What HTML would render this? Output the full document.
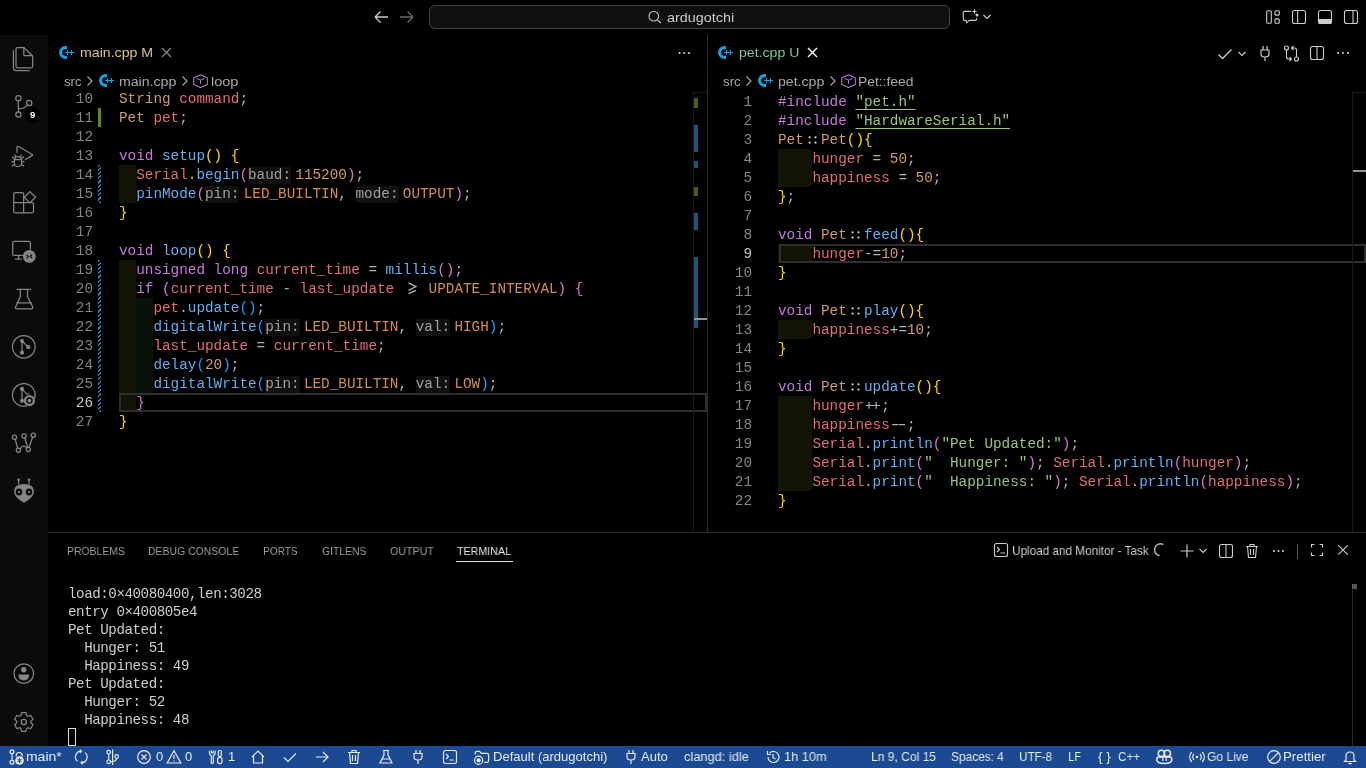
<!DOCTYPE html>
<html><head><meta charset="utf-8"><style>
*{margin:0;padding:0;box-sizing:border-box}
html,body{width:1366px;height:768px;overflow:hidden;background:#000;font-family:"Liberation Sans",sans-serif;color:#ccc}
.abs{position:absolute}
#act{position:absolute;left:0;top:35px;width:48px;height:711px;background:#0b0b0b}
#status{position:absolute;left:0;top:746px;width:1366px;height:22px;background:#1b4a92;color:#e8e8e8;font-size:13px}
.st{position:absolute;top:0;height:22px;line-height:22px;white-space:nowrap}
.ln{will-change:transform;position:absolute;width:40px;text-align:right;font-family:"Liberation Mono",monospace;font-size:14.33px;line-height:19px;height:19px;color:#858585}
.cl{will-change:transform;position:absolute;font-family:"Liberation Mono",monospace;font-size:14.33px;line-height:19px;height:19px;white-space:pre;color:#abb2bf}
.kw{color:#c678dd}.fn{color:#61afef}.va{color:#e06c75}.ty{color:#d19a66}.nu{color:#d19a66}.ma{color:#d58d45}
.op{color:#abb2bf}.pu{color:#abb2bf}.b1{color:#ffd700}.b2{color:#da70d6}.b3{color:#179fff}
.str{color:#98c379}.stu{color:#98c379;text-decoration:underline;text-underline-offset:3px}
.sg{color:#98c379}
.lig2{display:inline-block;width:17.2px;text-align:center}
.hint{display:inline-block;margin-right:4.3px;background:#101010;color:#a0a0a0;text-align:center;height:17px;line-height:17px;vertical-align:top;margin-top:1px}
.tabt{position:absolute;font-size:13px;white-space:nowrap}
.bc{position:absolute;font-size:13px;color:#a9a9a9;white-space:nowrap}
.ptab{position:absolute;top:541px;font-size:11px;color:#9d9d9d;white-space:nowrap;height:18px;line-height:18px}
.term{will-change:transform;position:absolute;left:68px;font-family:"Liberation Mono",monospace;font-size:14.2px;letter-spacing:-0.45px;line-height:18px;color:#cccccc;white-space:pre}
svg{position:absolute;overflow:visible}
.tx{will-change:transform;position:absolute;white-space:nowrap;line-height:20px;height:20px}
.lg{position:relative;display:inline-block;width:17.2px;height:19px;vertical-align:top}

</style></head><body>
<!-- title bar -->
<svg style="left:372px;top:9px" width="18" height="16" viewBox="0 0 18 16"><path d="M3 8H16M3 8L8.5 2.5M3 8L8.5 13.5" stroke="#cccccc" stroke-width="1.3" fill="none"/></svg>
<svg style="left:398px;top:9px" width="18" height="16" viewBox="0 0 18 16"><path d="M2 8H15M15 8L9.5 2.5M15 8L9.5 13.5" stroke="#6a6a6a" stroke-width="1.3" fill="none"/></svg>
<div class="abs" style="left:429px;top:5px;width:521px;height:24px;border:1px solid #444444;border-radius:6px;background:#0f0f0f"></div>
<svg style="left:640px;top:0" width="30" height="35" viewBox="640 0 30 35"><circle cx="653.8" cy="16.2" r="4.8" stroke="#cccccc" stroke-width="1.05" fill="none"/><path d="M657.3 19.7L660.8 23" stroke="#cccccc" stroke-width="1.1"/></svg>
<svg style="left:950px;top:0" width="40" height="35" viewBox="950 0 40 35"><path d="M970.9 11.4H964.5Q963.3 11.4 963.3 12.6V19.2Q963.3 20.4 964.5 20.4H966L966.8 22.8L969.3 20.4H975.4Q976.6 20.4 976.6 19.2V18" stroke="#cccccc" stroke-width="1.1" fill="none"/><path d="M974.4 8.3L975.1 10.7L977.5 11.4L975.1 12.1L974.4 14.5L973.7 12.1L971.3 11.4L973.7 10.7Z" fill="#cccccc"/><circle cx="977" cy="15.1" r="1.5" fill="#cccccc"/></svg>
<svg style="left:982px;top:12px" width="10" height="10" viewBox="0 0 10 10"><path d="M1.5 3L5 6.5L8.5 3" stroke="#cccccc" stroke-width="1.2" fill="none"/></svg>
<svg style="left:1265px;top:9px" width="16" height="16" viewBox="0 0 16 16"><rect x="1.7" y="1.7" width="4.6" height="12.6" rx="1" stroke="#cccccc" stroke-width="1.1" fill="none"/><rect x="9.9" y="1.7" width="4.4" height="4.4" rx="1" stroke="#cccccc" stroke-width="1.1" fill="none"/><rect x="9.9" y="9.9" width="4.4" height="4.4" rx="1" stroke="#cccccc" stroke-width="1.1" fill="none"/></svg>
<svg style="left:1291px;top:9px" width="16" height="16" viewBox="0 0 16 16"><rect x="1.5" y="1.5" width="13" height="13" rx="2" stroke="#cccccc" stroke-width="1.1" fill="none"/><path d="M6.6 1.5V14.5" stroke="#cccccc" stroke-width="1.1"/></svg>
<svg style="left:1317px;top:9px" width="16" height="16" viewBox="0 0 16 16"><rect x="1.5" y="1.5" width="13" height="13" rx="2" stroke="#cccccc" stroke-width="1.1" fill="none"/><rect x="1.5" y="10" width="13" height="4.5" fill="#cccccc"/></svg>
<svg style="left:1343px;top:9px" width="16" height="16" viewBox="0 0 16 16"><rect x="1.5" y="1.5" width="13" height="13" rx="2" stroke="#cccccc" stroke-width="1.1" fill="none"/><path d="M10 1.5V14.5" stroke="#cccccc" stroke-width="1.1"/></svg>

<!-- activity bar -->
<div id="act"></div>
<svg style="left:0;top:0" width="48" height="768" viewBox="0 0 48 768"><path d="M17.5 47.5H23.8L32.7 56.2V66.3Q32.7 67.8 31.2 67.8H17.5Q16 67.8 16 66.3V49Q16 47.5 17.5 47.5Z" stroke="#858585" stroke-width="1.25" fill="none" stroke-linejoin="round" stroke-linecap="round"/><path d="M23.8 47.5V54.7Q23.8 55.6 24.7 55.6H32.5" stroke="#858585" stroke-width="1.25" fill="none" stroke-linejoin="round" stroke-linecap="round"/><path d="M13.4 50.5V67.5Q13.4 70.5 16.4 70.5H29.3" stroke="#858585" stroke-width="1.25" fill="none" stroke-linejoin="round" stroke-linecap="round"/><circle cx="18.4" cy="98.3" r="2.6" stroke="#858585" stroke-width="1.25" fill="none" stroke-linejoin="round" stroke-linecap="round"/><circle cx="29.2" cy="103" r="2.6" stroke="#858585" stroke-width="1.25" fill="none" stroke-linejoin="round" stroke-linecap="round"/><circle cx="18.4" cy="114.5" r="2.6" stroke="#858585" stroke-width="1.25" fill="none" stroke-linejoin="round" stroke-linecap="round"/><path d="M18.4 100.9V111.9M27.5 105Q25 108.5 18.6 108.8" stroke="#858585" stroke-width="1.25" fill="none" stroke-linejoin="round" stroke-linecap="round"/><path d="M17 152.5V147.2Q17 145.8 18.3 146.5L32 154.3Q33 155 32 155.6L25.5 159.5" stroke="#858585" stroke-width="1.25" fill="none" stroke-linejoin="round" stroke-linecap="round"/><path d="M14.3 160.5Q14.3 156.5 18 156.5Q21.7 156.5 21.7 160.5V163Q21.7 166.5 18 166.5Q14.3 166.5 14.3 163Z" stroke="#858585" stroke-width="1.25" fill="none" stroke-linejoin="round" stroke-linecap="round"/><path d="M12.3 157L14.6 158.6M23.7 157L21.4 158.6M12 161.5H14.3M24 161.5H21.7M12.3 166L14.6 164.4M23.7 166L21.4 164.4M15.5 156.8L14.8 155M20.5 156.8L21.2 155M14.5 159.5H21.5" stroke="#858585" stroke-width="1.25" fill="none" stroke-linejoin="round" stroke-linecap="round"/><path d="M23.6 202.6V194.2Q23.6 192.7 22.1 192.7H15.2Q13.7 192.7 13.7 194.2V211.3Q13.7 212.8 15.2 212.8H32Q33.5 212.8 33.5 211.3V204.1Q33.5 202.6 32 202.6H13.7M23.6 202.6V212.8" stroke="#858585" stroke-width="1.25" fill="none" stroke-linejoin="round" stroke-linecap="round"/><path d="M29.9 191.6L35.5 197.3L29.9 202.9L24.3 197.3Z" stroke="#858585" stroke-width="1.25" fill="none" stroke-linejoin="round" stroke-linecap="round"/><path d="M22.5 255.4H14.2Q12.7 255.4 12.7 253.9V242.8Q12.7 241.3 14.2 241.3H28.9Q30.4 241.3 30.4 242.8V249" stroke="#858585" stroke-width="1.25" fill="none" stroke-linejoin="round" stroke-linecap="round"/><path d="M18.5 255.5V259M15.3 259H21.5" stroke="#858585" stroke-width="1.25" fill="none" stroke-linejoin="round" stroke-linecap="round"/><circle cx="29.3" cy="256.4" r="6.4" fill="#858585"/><path d="M26.6 254.8L28.4 256.6L26.6 258.4M32 254.4L30.2 256.2L32 258" stroke="#0b0b0b" stroke-width="1.1" fill="none"/><path d="M17.2 289.3H30.4M20.3 289.3V296.5L15.6 307Q15 308.8 17 308.8H31.3Q33.3 308.8 32.7 307L27.5 296.5V289.3M16.8 302.8H31.5" stroke="#858585" stroke-width="1.25" fill="none" stroke-linejoin="round" stroke-linecap="round"/><circle cx="23.8" cy="346.8" r="11.3" stroke="#858585" stroke-width="1.25" fill="none" stroke-linejoin="round" stroke-linecap="round"/><circle cx="22" cy="341" r="2.1" fill="#858585"/><circle cx="22" cy="352.7" r="2.1" fill="#858585"/><circle cx="28.3" cy="347.2" r="2.1" fill="#858585"/><path d="M22 341V352.7M22 341L28.3 347.2" stroke="#858585" stroke-width="1.25" fill="none" stroke-linejoin="round" stroke-linecap="round"/><path d="M34.7 397.9A11.3 11.3 0 1 0 26.7 405.9" stroke="#858585" stroke-width="1.25" fill="none" stroke-linejoin="round" stroke-linecap="round"/><circle cx="22" cy="388.9" r="2.1" fill="#858585"/><circle cx="22" cy="400.8" r="2.1" fill="#858585"/><path d="M22 388.9V400.8M22 388.9L26.5 393.8H29" stroke="#858585" stroke-width="1.25" fill="none" stroke-linejoin="round" stroke-linecap="round"/><circle cx="29.4" cy="400.6" r="5.6" fill="#858585"/><circle cx="29.4" cy="400.6" r="2.6" stroke="#0b0b0b" stroke-width="1.3" fill="#858585"/><circle cx="14.5" cy="437.3" r="2.1" stroke="#858585" stroke-width="1.25" fill="none" stroke-linejoin="round" stroke-linecap="round"/><circle cx="24" cy="436" r="2.1" stroke="#858585" stroke-width="1.25" fill="none" stroke-linejoin="round" stroke-linecap="round"/><circle cx="33.3" cy="435.2" r="2.1" stroke="#858585" stroke-width="1.25" fill="none" stroke-linejoin="round" stroke-linecap="round"/><circle cx="18.4" cy="450.3" r="2.1" stroke="#858585" stroke-width="1.25" fill="none" stroke-linejoin="round" stroke-linecap="round"/><circle cx="28.3" cy="449.5" r="2.1" stroke="#858585" stroke-width="1.25" fill="none" stroke-linejoin="round" stroke-linecap="round"/><path d="M15.3 439.3L17.6 448.3M20.2 448.8Q23 444 26.6 447.8M24.8 438L27.6 447.5M32.6 437.2L29 447.5" stroke="#858585" stroke-width="1.25" fill="none" stroke-linejoin="round" stroke-linecap="round"/><path d="M24 484Q34 484 34 491.5Q34 497 24 502.8Q14 497 14 491.5Q14 484 24 484Z" fill="#858585"/><ellipse cx="19" cy="492" rx="3.3" ry="3.6" fill="#0b0b0b"/><ellipse cx="29" cy="492" rx="3.3" ry="3.6" fill="#0b0b0b"/><circle cx="19" cy="492" r="1.1" fill="#858585"/><circle cx="29" cy="492" r="1.1" fill="#858585"/><path d="M18.6 480V484.5M29 480V484.5" stroke="#858585" stroke-width="1.1"/><circle cx="18.6" cy="479.8" r="1.3" fill="#858585"/><circle cx="29" cy="479.8" r="1.3" fill="#858585"/><circle cx="23.8" cy="673.6" r="9.8" stroke="#858585" stroke-width="1.25" fill="none" stroke-linejoin="round" stroke-linecap="round"/><circle cx="23.8" cy="669.8" r="2.7" fill="#858585"/><path d="M18.4 674.6H29.2Q29.2 680.5 23.8 680.5Q18.4 680.5 18.4 674.6Z" fill="#858585"/><path d="M21.64 712.65 L25.96 712.65 L26.76 715.66 L27.82 716.27 L30.82 715.45 L32.98 719.19 L30.77 721.39 L30.77 722.61 L32.98 724.81 L30.82 728.55 L27.82 727.73 L26.76 728.34 L25.96 731.35 L21.64 731.35 L20.84 728.34 L19.78 727.73 L16.78 728.55 L14.62 724.81 L16.83 722.61 L16.83 721.39 L14.62 719.19 L16.78 715.45 L19.78 716.27 L20.84 715.66Z" stroke="#858585" stroke-width="1.25" fill="none" stroke-linejoin="round" stroke-linecap="round"/><circle cx="23.8" cy="722" r="2.6" stroke="#858585" stroke-width="1.25" fill="none" stroke-linejoin="round" stroke-linecap="round"/></svg>
<div class="abs" style="left:24.5px;top:107px;width:15.5px;height:15.5px;border-radius:8px;background:#000"></div><div class="tx" style="left:24.5px;top:104.6px;width:15.5px;font-size:9.5px;font-weight:bold;text-align:center;color:#fff">9</div>

<!-- editor divider -->
<div class="abs" style="left:707px;top:35px;width:1px;height:497px;background:#2b2b2b"></div>
<div class="abs" style="left:707px;top:69px;width:1px;height:1px;background:#000"></div>

<!-- LEFT EDITOR -->
<svg style="left:58px;top:45px" width="17" height="15" viewBox="0 0 17 15"><path d="M9 1H7.5A6.5 6.5 0 0 0 7.5 14H9V10.8H7.5A3.3 3.3 0 0 1 7.5 4.2H9Z" fill="#1a9fe0"/><path d="M7 7.5H16M9.5 5V10M13.5 5V10" stroke="#1a9fe0" stroke-width="1.1"/></svg>
<svg style="left:161px;top:47px" width="11" height="11" viewBox="0 0 11 11"><path d="M1 1L10 10M10 1L1 10" stroke="#8b8b8b" stroke-width="1.2"/></svg>
<svg style="left:676px;top:50px" width="16" height="6" viewBox="0 0 16 6"><circle cx="3.5" cy="3" r="1.1" fill="#cccccc"/><circle cx="8.2" cy="3" r="1.1" fill="#cccccc"/><circle cx="12.9" cy="3" r="1.1" fill="#cccccc"/></svg>

<svg style="left:86px;top:75px" width="8" height="12" viewBox="0 0 8 12"><path d="M1.5 1.5L6 6L1.5 10.5" stroke="#a9a9a9" stroke-width="1.1" fill="none"/></svg>
<svg style="left:98px;top:73px" width="17" height="15" viewBox="0 0 17 15"><path d="M9 1H7.5A6.5 6.5 0 0 0 7.5 14H9V10.8H7.5A3.3 3.3 0 0 1 7.5 4.2H9Z" fill="#1a9fe0"/><path d="M7 7.5H16M9.5 5V10M13.5 5V10" stroke="#1a9fe0" stroke-width="1.1"/></svg>
<svg style="left:181px;top:75px" width="8" height="12" viewBox="0 0 8 12"><path d="M1.5 1.5L6 6L1.5 10.5" stroke="#a9a9a9" stroke-width="1.1" fill="none"/></svg>
<svg style="left:192.5px;top:74px" width="16" height="15" viewBox="0 0 16 15"><path d="M7.5 0.7L14.3 3.8V10.4L7.5 13.5L0.7 10.4V3.8Z" stroke="#b180d7" stroke-width="1.05" fill="none" stroke-linejoin="round"/><path d="M3.4 4.4L7.5 6.1L11.6 4.4M7.5 6.1V9.9" stroke="#b180d7" stroke-width="1" fill="none"/></svg>

<div class="abs" style="left:48px;top:92px;width:659px;height:440px;overflow:hidden">
 <div class="abs" style="left:-48px;top:-92px;width:1366px;height:768px">
  <!-- indent rainbow -->
  <div class="abs" style="left:119.0px;top:165px;width:17.2px;height:19px;background:rgba(255,255,64,0.07)"></div>
<div class="abs" style="left:119.0px;top:184px;width:17.2px;height:19px;background:rgba(255,255,64,0.07)"></div>
<div class="abs" style="left:119.0px;top:260px;width:17.2px;height:19px;background:rgba(255,255,64,0.07)"></div>
<div class="abs" style="left:119.0px;top:279px;width:17.2px;height:19px;background:rgba(255,255,64,0.07)"></div>
<div class="abs" style="left:119.0px;top:298px;width:17.2px;height:19px;background:rgba(255,255,64,0.07)"></div>
<div class="abs" style="left:136.2px;top:298px;width:17.2px;height:19px;background:rgba(127,255,127,0.07)"></div>
<div class="abs" style="left:119.0px;top:317px;width:17.2px;height:19px;background:rgba(255,255,64,0.07)"></div>
<div class="abs" style="left:136.2px;top:317px;width:17.2px;height:19px;background:rgba(127,255,127,0.07)"></div>
<div class="abs" style="left:119.0px;top:336px;width:17.2px;height:19px;background:rgba(255,255,64,0.07)"></div>
<div class="abs" style="left:136.2px;top:336px;width:17.2px;height:19px;background:rgba(127,255,127,0.07)"></div>
<div class="abs" style="left:119.0px;top:355px;width:17.2px;height:19px;background:rgba(255,255,64,0.07)"></div>
<div class="abs" style="left:136.2px;top:355px;width:17.2px;height:19px;background:rgba(127,255,127,0.07)"></div>
<div class="abs" style="left:119.0px;top:374px;width:17.2px;height:19px;background:rgba(255,255,64,0.07)"></div>
<div class="abs" style="left:136.2px;top:374px;width:17.2px;height:19px;background:rgba(127,255,127,0.07)"></div>
<div class="abs" style="left:119.0px;top:393px;width:17.2px;height:19px;background:rgba(255,255,64,0.07)"></div>
  <!-- current line -->
  <div class="abs" style="left:119px;top:393px;width:588px;height:19px;border:2px solid #2e2e2e"></div>
  <!-- git gutter -->
  <div class="abs" style="left:98px;top:108px;width:3px;height:19px;background:#5a8a1e"></div>
  <div class="abs" style="background:repeating-linear-gradient(135deg,#1b80b0 0 1.5px,#000 1.5px 3px);left:98px;top:165px;width:3px;height:38px"></div>
  <div class="abs" style="background:repeating-linear-gradient(135deg,#1b80b0 0 1.5px,#000 1.5px 3px);left:98px;top:260px;width:3px;height:152px"></div>
  <div class="ln" style="top:90px;left:53px">10</div>
<div class="cl" style="top:90px;left:119px"><span class="ty">String</span> <span class="va">command</span><span class="pu">; </span></div>
<div class="ln" style="top:109px;left:53px">11</div>
<div class="cl" style="top:109px;left:119px"><span class="ty">Pet</span> <span class="va">pet</span><span class="pu">;</span></div>
<div class="ln" style="top:128px;left:53px">12</div>
<div class="cl" style="top:128px;left:119px"></div>
<div class="ln" style="top:147px;left:53px">13</div>
<div class="cl" style="top:147px;left:119px"><span class="kw">void</span> <span class="fn">setup</span><span class="b1">()</span> <span class="b1">{</span></div>
<div class="ln" style="top:166px;left:53px">14</div>
<div class="cl" style="top:166px;left:119px">  <span class="va">Serial</span><span class="pu">.</span><span class="fn">begin</span><span class="b2">(</span><span class="hint" style="width:43.0px">baud:</span><span class="nu">115200</span><span class="b2">)</span><span class="pu">;</span></div>
<div class="ln" style="top:185px;left:53px">15</div>
<div class="cl" style="top:185px;left:119px">  <span class="fn">pinMode</span><span class="b2">(</span><span class="hint" style="width:34.4px">pin:</span><span class="ma">LED_BUILTIN</span><span class="pu">, </span><span class="hint" style="width:43.0px">mode:</span><span class="ma">OUTPUT</span><span class="b2">)</span><span class="pu">;</span></div>
<div class="ln" style="top:204px;left:53px">16</div>
<div class="cl" style="top:204px;left:119px"><span class="b1">}</span></div>
<div class="ln" style="top:223px;left:53px">17</div>
<div class="cl" style="top:223px;left:119px"></div>
<div class="ln" style="top:242px;left:53px">18</div>
<div class="cl" style="top:242px;left:119px"><span class="kw">void</span> <span class="fn">loop</span><span class="b1">()</span> <span class="b1">{</span></div>
<div class="ln" style="top:261px;left:53px">19</div>
<div class="cl" style="top:261px;left:119px">  <span class="kw">unsigned</span> <span class="kw">long</span> <span class="va">current_time</span><span class="op"> = </span><span class="fn">millis</span><span class="b2">()</span><span class="pu">;</span></div>
<div class="ln" style="top:280px;left:53px">20</div>
<div class="cl" style="top:280px;left:119px">  <span class="kw">if</span> <span class="b2">(</span><span class="va">current_time</span><span class="op"> - </span><span class="va">last_update</span> <span class="lg"><svg style="left:0;top:-1px" width="17.2" height="19" viewBox="0 0 17.2 19"><path d="M5.5 3.8L13 7.6L5.5 11.4M5.5 14.7L13 11.4" stroke="#abb2bf" stroke-width="1.3" fill="none"/></svg></span> <span class="ma">UPDATE_INTERVAL</span><span class="b2">)</span> <span class="b2">{</span></div>
<div class="ln" style="top:299px;left:53px">21</div>
<div class="cl" style="top:299px;left:119px">    <span class="va">pet</span><span class="pu">.</span><span class="fn">update</span><span class="b3">()</span><span class="pu">;</span></div>
<div class="ln" style="top:318px;left:53px">22</div>
<div class="cl" style="top:318px;left:119px">    <span class="fn">digitalWrite</span><span class="b3">(</span><span class="hint" style="width:34.4px">pin:</span><span class="ma">LED_BUILTIN</span><span class="pu">, </span><span class="hint" style="width:34.4px">val:</span><span class="ma">HIGH</span><span class="b3">)</span><span class="pu">;</span></div>
<div class="ln" style="top:337px;left:53px">23</div>
<div class="cl" style="top:337px;left:119px">    <span class="va">last_update</span><span class="op"> = </span><span class="va">current_time</span><span class="pu">;</span></div>
<div class="ln" style="top:356px;left:53px">24</div>
<div class="cl" style="top:356px;left:119px">    <span class="fn">delay</span><span class="b3">(</span><span class="nu">20</span><span class="b3">)</span><span class="pu">;</span></div>
<div class="ln" style="top:375px;left:53px">25</div>
<div class="cl" style="top:375px;left:119px">    <span class="fn">digitalWrite</span><span class="b3">(</span><span class="hint" style="width:34.4px">pin:</span><span class="ma">LED_BUILTIN</span><span class="pu">, </span><span class="hint" style="width:34.4px">val:</span><span class="ma">LOW</span><span class="b3">)</span><span class="pu">;</span></div>
<div class="ln" style="top:394px;left:53px;color:#c6c6c6">26</div>
<div class="cl" style="top:394px;left:119px">  <span class="b2">}</span></div>
<div class="ln" style="top:413px;left:53px">27</div>
<div class="cl" style="top:413px;left:119px"><span class="b1">}</span></div>
 </div>
</div>
<!-- left overview ruler -->
<div class="abs" style="left:693px;top:92px;width:1px;height:440px;background:#1a1a1a"></div>
<div class="abs" style="left:693px;top:92px;width:14px;height:1px;background:#1a1a1a"></div>
<div class="abs" style="left:694px;top:98px;width:4px;height:10px;background:#45610f"></div>
<div class="abs" style="left:694px;top:125px;width:4px;height:27px;background:#1b5878"></div>
<div class="abs" style="left:694px;top:161px;width:4px;height:7px;background:#1b5878"></div>
<div class="abs" style="left:694px;top:187px;width:4px;height:9px;background:#45610f"></div>
<div class="abs" style="left:694px;top:213px;width:4px;height:17px;background:#1b5878"></div>
<div class="abs" style="left:694px;top:257px;width:4px;height:71px;background:#1b5878"></div>
<div class="abs" style="left:694px;top:318px;width:13px;height:2px;background:#959595"></div>

<!-- RIGHT EDITOR -->
<svg style="left:717px;top:45px" width="17" height="15" viewBox="0 0 17 15"><path d="M9 1H7.5A6.5 6.5 0 0 0 7.5 14H9V10.8H7.5A3.3 3.3 0 0 1 7.5 4.2H9Z" fill="#1a9fe0"/><path d="M7 7.5H16M9.5 5V10M13.5 5V10" stroke="#1a9fe0" stroke-width="1.1"/></svg>
<svg style="left:807px;top:47px" width="11" height="11" viewBox="0 0 11 11"><path d="M1 1L10 10M10 1L1 10" stroke="#ffffff" stroke-width="1.4"/></svg>
<svg style="left:1217px;top:46px" width="16" height="16" viewBox="0 0 16 16"><path d="M1.5 8.5L5.5 12.5L14.5 3.5" stroke="#cccccc" stroke-width="1.3" fill="none"/></svg>
<svg style="left:1237px;top:50px" width="10" height="8" viewBox="0 0 10 8"><path d="M1.5 2L5 5.5L8.5 2" stroke="#cccccc" stroke-width="1.1" fill="none"/></svg>
<svg style="left:1257px;top:45px" width="16" height="17" viewBox="0 0 16 17"><path d="M6 1V5M10 1V5M4 5H12V9Q12 12 8 12Q4 12 4 9Z M8 12V16" stroke="#cccccc" stroke-width="1.2" fill="none"/></svg>
<svg style="left:1283px;top:45px" width="17" height="17" viewBox="0 0 17 17"><circle cx="3.5" cy="3" r="2" stroke="#cccccc" stroke-width="1.1" fill="none"/><circle cx="13.5" cy="14" r="2" stroke="#cccccc" stroke-width="1.1" fill="none"/><path d="M3.5 5V12Q3.5 14 5.5 14H8M6.5 12L8.5 14L6.5 16 M13.5 12V5Q13.5 3 11.5 3H9M10.5 1L8.5 3L10.5 5" stroke="#cccccc" stroke-width="1.1" fill="none"/></svg>
<svg style="left:1309px;top:45px" width="16" height="16" viewBox="0 0 16 16"><rect x="1.5" y="1.5" width="13" height="13" rx="2" stroke="#cccccc" stroke-width="1.1" fill="none"/><path d="M8 1.5V14.5" stroke="#cccccc" stroke-width="1.1"/></svg>
<svg style="left:1335px;top:50px" width="16" height="6" viewBox="0 0 16 6"><circle cx="3" cy="3" r="1.1" fill="#cccccc"/><circle cx="8" cy="3" r="1.1" fill="#cccccc"/><circle cx="13" cy="3" r="1.1" fill="#cccccc"/></svg>

<svg style="left:745px;top:75px" width="8" height="12" viewBox="0 0 8 12"><path d="M1.5 1.5L6 6L1.5 10.5" stroke="#a9a9a9" stroke-width="1.1" fill="none"/></svg>
<svg style="left:757px;top:73px" width="17" height="15" viewBox="0 0 17 15"><path d="M9 1H7.5A6.5 6.5 0 0 0 7.5 14H9V10.8H7.5A3.3 3.3 0 0 1 7.5 4.2H9Z" fill="#1a9fe0"/><path d="M7 7.5H16M9.5 5V10M13.5 5V10" stroke="#1a9fe0" stroke-width="1.1"/></svg>
<svg style="left:829px;top:75px" width="8" height="12" viewBox="0 0 8 12"><path d="M1.5 1.5L6 6L1.5 10.5" stroke="#a9a9a9" stroke-width="1.1" fill="none"/></svg>
<svg style="left:840.5px;top:74px" width="16" height="15" viewBox="0 0 16 15"><path d="M7.5 0.7L14.3 3.8V10.4L7.5 13.5L0.7 10.4V3.8Z" stroke="#b180d7" stroke-width="1.05" fill="none" stroke-linejoin="round"/><path d="M3.4 4.4L7.5 6.1L11.6 4.4M7.5 6.1V9.9" stroke="#b180d7" stroke-width="1" fill="none"/></svg>

<div class="abs" style="left:708px;top:92px;width:658px;height:440px;overflow:hidden">
 <div class="abs" style="left:-708px;top:-92px;width:1366px;height:768px">
  <div class="abs" style="left:778.0px;top:149px;width:34.4px;height:19px;background:rgba(255,255,64,0.07)"></div>
<div class="abs" style="left:778.0px;top:168px;width:34.4px;height:19px;background:rgba(255,255,64,0.07)"></div>
<div class="abs" style="left:778.0px;top:244px;width:34.4px;height:19px;background:rgba(255,255,64,0.07)"></div>
<div class="abs" style="left:778.0px;top:320px;width:34.4px;height:19px;background:rgba(255,255,64,0.07)"></div>
<div class="abs" style="left:778.0px;top:396px;width:34.4px;height:19px;background:rgba(255,255,64,0.07)"></div>
<div class="abs" style="left:778.0px;top:415px;width:34.4px;height:19px;background:rgba(255,255,64,0.07)"></div>
<div class="abs" style="left:778.0px;top:434px;width:34.4px;height:19px;background:rgba(255,255,64,0.07)"></div>
<div class="abs" style="left:778.0px;top:453px;width:34.4px;height:19px;background:rgba(255,255,64,0.07)"></div>
<div class="abs" style="left:778.0px;top:472px;width:34.4px;height:19px;background:rgba(255,255,64,0.07)"></div>
  <div class="abs" style="left:779px;top:244px;width:587px;height:19px;border:2px solid #2e2e2e"></div>
  <div class="ln" style="top:93px;left:712px">1</div>
<div class="cl" style="top:93px;left:778px"><span class="kw">#include</span> <span class="stu">"pet.h"</span></div>
<div class="ln" style="top:112px;left:712px">2</div>
<div class="cl" style="top:112px;left:778px"><span class="kw">#include</span> <span class="stu">"HardwareSerial.h"</span></div>
<div class="ln" style="top:131px;left:712px">3</div>
<div class="cl" style="top:131px;left:778px"><span class="ty">Pet</span><span class="lg"><svg style="left:0;top:-1px" width="17.2" height="19" viewBox="0 0 17.2 19"><circle cx="5.6" cy="7.3" r="1.15" fill="#cfcfcf"/><circle cx="5.6" cy="12.6" r="1.15" fill="#cfcfcf"/><circle cx="11.5" cy="7.3" r="1.15" fill="#cfcfcf"/><circle cx="11.5" cy="12.6" r="1.15" fill="#cfcfcf"/></svg></span><span class="ty">Pet</span><span class="b1">()</span><span class="b1">{</span></div>
<div class="ln" style="top:150px;left:712px">4</div>
<div class="cl" style="top:150px;left:778px">    <span class="va">hunger</span><span class="op"> = </span><span class="nu">50</span><span class="pu">;</span></div>
<div class="ln" style="top:169px;left:712px">5</div>
<div class="cl" style="top:169px;left:778px">    <span class="va">happiness</span><span class="op"> = </span><span class="nu">50</span><span class="pu">;</span></div>
<div class="ln" style="top:188px;left:712px">6</div>
<div class="cl" style="top:188px;left:778px"><span class="b1">}</span><span class="pu">;</span></div>
<div class="ln" style="top:207px;left:712px">7</div>
<div class="cl" style="top:207px;left:778px"></div>
<div class="ln" style="top:226px;left:712px">8</div>
<div class="cl" style="top:226px;left:778px"><span class="kw">void</span> <span class="ty">Pet</span><span class="lg"><svg style="left:0;top:-1px" width="17.2" height="19" viewBox="0 0 17.2 19"><circle cx="5.6" cy="7.3" r="1.15" fill="#cfcfcf"/><circle cx="5.6" cy="12.6" r="1.15" fill="#cfcfcf"/><circle cx="11.5" cy="7.3" r="1.15" fill="#cfcfcf"/><circle cx="11.5" cy="12.6" r="1.15" fill="#cfcfcf"/></svg></span><span class="fn">feed</span><span class="b1">()</span><span class="b1">{</span></div>
<div class="ln" style="top:245px;left:712px;color:#c6c6c6">9</div>
<div class="cl" style="top:245px;left:778px">    <span class="va">hunger</span><span class="op">-=</span><span class="nu">10</span><span class="pu">;</span></div>
<div class="ln" style="top:264px;left:712px">10</div>
<div class="cl" style="top:264px;left:778px"><span class="b1">}</span></div>
<div class="ln" style="top:283px;left:712px">11</div>
<div class="cl" style="top:283px;left:778px"></div>
<div class="ln" style="top:302px;left:712px">12</div>
<div class="cl" style="top:302px;left:778px"><span class="kw">void</span> <span class="ty">Pet</span><span class="lg"><svg style="left:0;top:-1px" width="17.2" height="19" viewBox="0 0 17.2 19"><circle cx="5.6" cy="7.3" r="1.15" fill="#cfcfcf"/><circle cx="5.6" cy="12.6" r="1.15" fill="#cfcfcf"/><circle cx="11.5" cy="7.3" r="1.15" fill="#cfcfcf"/><circle cx="11.5" cy="12.6" r="1.15" fill="#cfcfcf"/></svg></span><span class="fn">play</span><span class="b1">()</span><span class="b1">{</span></div>
<div class="ln" style="top:321px;left:712px">13</div>
<div class="cl" style="top:321px;left:778px">    <span class="va">happiness</span><span class="op">+=</span><span class="nu">10</span><span class="pu">;</span></div>
<div class="ln" style="top:340px;left:712px">14</div>
<div class="cl" style="top:340px;left:778px"><span class="b1">}</span></div>
<div class="ln" style="top:359px;left:712px">15</div>
<div class="cl" style="top:359px;left:778px"></div>
<div class="ln" style="top:378px;left:712px">16</div>
<div class="cl" style="top:378px;left:778px"><span class="kw">void</span> <span class="ty">Pet</span><span class="lg"><svg style="left:0;top:-1px" width="17.2" height="19" viewBox="0 0 17.2 19"><circle cx="5.6" cy="7.3" r="1.15" fill="#cfcfcf"/><circle cx="5.6" cy="12.6" r="1.15" fill="#cfcfcf"/><circle cx="11.5" cy="7.3" r="1.15" fill="#cfcfcf"/><circle cx="11.5" cy="12.6" r="1.15" fill="#cfcfcf"/></svg></span><span class="fn">update</span><span class="b1">()</span><span class="b1">{</span></div>
<div class="ln" style="top:397px;left:712px">17</div>
<div class="cl" style="top:397px;left:778px">    <span class="va">hunger</span><span class="lg"><svg style="left:0;top:-1px" width="17.2" height="19" viewBox="0 0 17.2 19"><path d="M1.7 9.5H15.9M5 5.9V12.8M12.2 5.9V12.8" stroke="#abb2bf" stroke-width="1.2" fill="none"/></svg></span><span class="pu">;</span></div>
<div class="ln" style="top:416px;left:712px">18</div>
<div class="cl" style="top:416px;left:778px">    <span class="va">happiness</span><span class="lg"><svg style="left:0;top:-1px" width="17.2" height="19" viewBox="0 0 17.2 19"><path d="M2.2 9.6H8.3M8.9 9.6H15.1" stroke="#abb2bf" stroke-width="1.2" fill="none"/></svg></span><span class="pu">;</span></div>
<div class="ln" style="top:435px;left:712px">19</div>
<div class="cl" style="top:435px;left:778px">    <span class="va">Serial</span><span class="pu">.</span><span class="fn">println</span><span class="b2">(</span><span class="sg">"Pet Updated:"</span><span class="b2">)</span><span class="pu">;</span></div>
<div class="ln" style="top:454px;left:712px">20</div>
<div class="cl" style="top:454px;left:778px">    <span class="va">Serial</span><span class="pu">.</span><span class="fn">print</span><span class="b2">(</span><span class="sg">"  Hunger: "</span><span class="b2">)</span><span class="pu">; </span><span class="va">Serial</span><span class="pu">.</span><span class="fn">println</span><span class="b2">(</span><span class="va">hunger</span><span class="b2">)</span><span class="pu">;</span></div>
<div class="ln" style="top:473px;left:712px">21</div>
<div class="cl" style="top:473px;left:778px">    <span class="va">Serial</span><span class="pu">.</span><span class="fn">print</span><span class="b2">(</span><span class="sg">"  Happiness: "</span><span class="b2">)</span><span class="pu">; </span><span class="va">Serial</span><span class="pu">.</span><span class="fn">println</span><span class="b2">(</span><span class="va">happiness</span><span class="b2">)</span><span class="pu">;</span></div>
<div class="ln" style="top:492px;left:712px">22</div>
<div class="cl" style="top:492px;left:778px"><span class="b1">}</span></div>
 </div>
</div>
<div class="abs" style="left:1352px;top:92px;width:1px;height:440px;background:#1a1a1a"></div>
<div class="abs" style="left:1352px;top:92px;width:14px;height:1px;background:#1a1a1a"></div>
<div class="abs" style="left:1353px;top:170px;width:13px;height:2px;background:#959595"></div>

<!-- PANEL -->
<div class="abs" style="left:48px;top:532px;width:1318px;height:1px;background:#2b2b2b"></div>
<div class="abs" style="left:456px;top:561px;width:57px;height:1px;background:#e7e7e7"></div>

<svg style="left:993px;top:542px" width="16" height="16" viewBox="0 0 16 16"><rect x="1.5" y="1.5" width="13" height="13" rx="2" stroke="#cccccc" stroke-width="1.1" fill="none"/><path d="M4 5L6.5 7.5L4 10M7.5 11H12" stroke="#cccccc" stroke-width="1.1" fill="none"/></svg>
<svg style="left:1150px;top:540px" width="24" height="22" viewBox="1150 540 24 22"><path d="M1162.75 544.2A6 6 0 1 0 1158.95 555.56" stroke="#b4b4b4" stroke-width="1.5" fill="none" stroke-linecap="round"/></svg>
<svg style="left:1178.7px;top:542.7px" width="16" height="16" viewBox="0 0 16 16"><path d="M8 1.5V14.5M1.5 8H14.5" stroke="#cccccc" stroke-width="1.2"/></svg>
<svg style="left:1197.5px;top:547px" width="10" height="8" viewBox="0 0 10 8"><path d="M1.5 2L5 5.5L8.5 2" stroke="#cccccc" stroke-width="1.1" fill="none"/></svg>
<svg style="left:1218.3px;top:542.7px" width="16" height="16" viewBox="0 0 16 16"><rect x="1.5" y="1.5" width="13" height="13" rx="2" stroke="#cccccc" stroke-width="1.1" fill="none"/><path d="M8 1.5V14.5" stroke="#cccccc" stroke-width="1.1"/></svg>
<svg style="left:1243.5px;top:542.7px" width="16" height="16" viewBox="0 0 16 16"><path d="M2 3.5H14M6 3.5V1.5H10V3.5M3.5 3.5L4.5 14.5H11.5L12.5 3.5M6.5 6V12M9.5 6V12" stroke="#cccccc" stroke-width="1.1" fill="none"/></svg>
<svg style="left:1270px;top:547.7px" width="16" height="6" viewBox="0 0 16 6"><circle cx="4" cy="3" r="1.05" fill="#cccccc"/><circle cx="8.5" cy="3" r="1.05" fill="#cccccc"/><circle cx="13" cy="3" r="1.05" fill="#cccccc"/></svg>
<div class="abs" style="left:1297px;top:543.5px;width:1px;height:15px;background:#555"></div>
<svg style="left:1309px;top:542px" width="16" height="16" viewBox="0 0 16 16"><path d="M2.5 5.5V2.5H5.5M10.5 2.5H13.5V5.5M13.5 10.5V13.5H10.5M5.5 13.5H2.5V10.5" stroke="#cccccc" stroke-width="1.15" fill="none"/></svg>
<svg style="left:1336px;top:543px" width="14" height="14" viewBox="0 0 14 14"><path d="M2.3 2.3L11.7 11.7M11.7 2.3L2.3 11.7" stroke="#cccccc" stroke-width="1.15"/></svg>

<div class="term" style="top:584.5px">load:0&#xD7;40080400,len:3028
entry 0&#xD7;400805e4
Pet Updated:
  Hunger: 51
  Happiness: 49
Pet Updated:
  Hunger: 52
  Happiness: 48</div>
<div class="abs" style="left:68px;top:728px;width:8px;height:18px;border:1px solid #e0e0e0"></div>
<div class="abs" style="left:1352px;top:584px;width:1px;height:162px;background:#2a2a2a"></div>
<div class="abs" style="left:1352px;top:584px;width:5px;height:5px;background:#555"></div>

<!-- STATUS BAR -->
<div id="status">
<svg style="left:0;top:-746px" width="130" height="768" viewBox="0 0 130 768"><circle cx="12" cy="751.8" r="1.9" stroke="#e8e8e8" stroke-width="1.2" fill="none"/><circle cx="12" cy="762.2" r="1.9" stroke="#e8e8e8" stroke-width="1.2" fill="none"/><path d="M12 753.7V760.3M16.2 756.5V755.5Q16.2 752.5 19.2 752.5Q22.2 752.5 22.2 755.5V756.5" stroke="#e8e8e8" stroke-width="1.2" fill="none"/><circle cx="19.5" cy="760.5" r="4.3" fill="#e8e8e8"/><path d="M19.5 758V763M17.3 759.2L21.7 761.8M21.7 759.2L17.3 761.8" stroke="#1b4a92" stroke-width="1"/><path d="M81.3 751.2A5.8 5.8 0 0 0 77.5 761.4M81.3 762.8A5.8 5.8 0 0 0 85.1 752.6M79.8 749.7L81.5 751.2L79.8 752.7M82.8 761.3L81.1 762.8L82.8 764.3" stroke="#e8e8e8" stroke-width="1.2" fill="none"/><circle cx="108.7" cy="752.2" r="1.8" stroke="#e8e8e8" stroke-width="1.2" fill="none"/><circle cx="108.7" cy="761.8" r="1.8" stroke="#e8e8e8" stroke-width="1.2" fill="none"/><circle cx="116.6" cy="756.5" r="1.8" stroke="#e8e8e8" stroke-width="1.2" fill="none"/><path d="M112.6 749.5V765M108.7 754V760M116.6 758.3Q116.6 761.8 110.5 761.8" stroke="#e8e8e8" stroke-width="1.2" fill="none"/></svg>
<svg style="left:136px;top:3px" width="16" height="16" viewBox="0 0 16 16"><circle cx="8" cy="8" r="6.3" stroke="#e8e8e8" stroke-width="1.2" fill="none"/><path d="M5.5 5.5L10.5 10.5M10.5 5.5L5.5 10.5" stroke="#e8e8e8" stroke-width="1.2" fill="none"/></svg>
<svg style="left:166px;top:3px" width="16" height="16" viewBox="0 0 16 16"><path d="M8 1.8L14.8 14H1.2Z M8 6V10M8 11.5V12.5" stroke="#e8e8e8" stroke-width="1.2" fill="none"/></svg>
<svg style="left:0;top:-746px" width="240" height="768" viewBox="0 0 240 768"><path d="M209.4 750.8V752.8Q209.4 755.2 211.3 755.8V762.8Q211.3 763.6 212.3 763.6Q213.3 763.6 213.3 762.8V755.8Q215.2 755.2 215.2 752.8V750.8M211.3 750.5V752.5Q212.3 753.3 213.3 752.5V750.5" stroke="#e8e8e8" stroke-width="1.2" fill="none"/><rect x="218.3" y="750.5" width="3" height="5.8" rx="1" stroke="#e8e8e8" stroke-width="1.2" fill="none"/><rect x="217.6" y="757.3" width="4.4" height="6.3" rx="2" stroke="#e8e8e8" stroke-width="1.2" fill="none"/></svg>
<svg style="left:250px;top:3px" width="16" height="16" viewBox="0 0 16 16"><path d="M2 8L8 2L14 8M3.5 6.5V14H12.5V6.5" stroke="#e8e8e8" stroke-width="1.2" fill="none"/></svg>
<svg style="left:282px;top:3px" width="16" height="16" viewBox="0 0 16 16"><path d="M2 8.5L6 12.5L14 4.5" stroke="#e8e8e8" stroke-width="1.2" fill="none"/></svg>
<svg style="left:314px;top:3px" width="16" height="16" viewBox="0 0 16 16"><path d="M2 8H14M9 3L14 8L9 13" stroke="#e8e8e8" stroke-width="1.2" fill="none"/></svg>
<svg style="left:346px;top:3px" width="16" height="16" viewBox="0 0 16 16"><path d="M2 3.5H14M6 3.5V1.5H10V3.5M3.5 3.5L4.5 14.5H11.5L12.5 3.5M6.5 6V12M9.5 6V12" stroke="#e8e8e8" stroke-width="1.2" fill="none"/></svg>
<svg style="left:378px;top:3px" width="16" height="16" viewBox="0 0 16 16"><path d="M5 1.5H11M6 1.5V6L2 14H14L10 6V1.5M4 10H12" stroke="#e8e8e8" stroke-width="1.2" fill="none"/></svg>
<svg style="left:410px;top:3px" width="16" height="16" viewBox="0 0 16 16"><path d="M6 1V4.5M10 1V4.5M4 4.5H12V8Q12 11 8 11Q4 11 4 8Z M8 11V15" stroke="#e8e8e8" stroke-width="1.2" fill="none"/></svg>
<svg style="left:442px;top:3px" width="16" height="16" viewBox="0 0 16 16"><rect x="1.5" y="1.5" width="13" height="13" rx="2" stroke="#e8e8e8" stroke-width="1.2" fill="none"/><path d="M4 5L6.5 7.5L4 10M7.5 11H12" stroke="#e8e8e8" stroke-width="1.2" fill="none"/></svg>
<svg style="left:460px;top:-746px" width="40" height="768" viewBox="460 0 40 768"><path d="M475.3 754.5V753Q475.3 751.4 477 751.4H479.5L481.5 753.4H487Q488.6 753.4 488.6 755V760.7Q488.6 762.3 487 762.3H484.3" stroke="#e8e8e8" stroke-width="1.2" fill="none"/><circle cx="478.6" cy="760.3" r="4.1" stroke="#e8e8e8" stroke-width="1.2" fill="none"/><circle cx="478.6" cy="760.3" r="2.1" fill="#e8e8e8"/></svg>
<svg style="left:623px;top:3px" width="16" height="16" viewBox="0 0 16 16"><path d="M6 1V4.5M10 1V4.5M4 4.5H12V8Q12 11 8 11Q4 11 4 8Z M8 11V15" stroke="#e8e8e8" stroke-width="1.2" fill="none"/></svg>
<svg style="left:765px;top:3px" width="16" height="16" viewBox="0 0 16 16"><path d="M3 8A5.5 5.5 0 1 0 4.6 4.1M2.5 2V5.5H6M8 5V8.5L10.5 10" stroke="#e8e8e8" stroke-width="1.2" fill="none"/></svg>
<svg style="left:1140px;top:-746px" width="40" height="768" viewBox="1140 0 40 768"><circle cx="1161.4" cy="753.4" r="3.2" stroke="#e8e8e8" stroke-width="1.5" fill="none"/><circle cx="1167.3" cy="753.4" r="3.2" stroke="#e8e8e8" stroke-width="1.5" fill="none"/><path d="M1158.3 756.8Q1156.5 757.8 1156.8 760.2Q1157.3 763.5 1164.3 763.5Q1171.3 763.5 1171.8 760.2Q1172.1 757.8 1170.3 756.8" stroke="#e8e8e8" stroke-width="1.6" fill="none"/><path d="M1158.5 757.2H1170.1" stroke="#e8e8e8" stroke-width="1.3"/><rect x="1162.2" y="758.2" width="1.3" height="2.8" fill="#e8e8e8"/><rect x="1165.6" y="758.2" width="1.3" height="2.8" fill="#e8e8e8"/></svg>
<svg style="left:1188.5px;top:3px" width="16" height="16" viewBox="0 0 16 16"><circle cx="8" cy="8" r="1.3" fill="#e8e8e8"/><path d="M5 5A4.2 4.2 0 0 0 5 11M11 5A4.2 4.2 0 0 1 11 11M2.8 3A7 7 0 0 0 2.8 13M13.2 3A7 7 0 0 1 13.2 13" stroke="#e8e8e8" stroke-width="1.2" fill="none"/></svg>
<svg style="left:1266px;top:3px" width="16" height="16" viewBox="0 0 16 16"><circle cx="8" cy="8" r="6.3" stroke="#e8e8e8" stroke-width="1.2" fill="none"/><path d="M3.5 12.5L12.5 3.5" stroke="#e8e8e8" stroke-width="1.2" fill="none"/></svg>
<svg style="left:1342px;top:3px" width="16" height="16" viewBox="0 0 16 16"><path d="M4 11V7Q4 3 8 3Q12 3 12 7V11L13.5 12.5H2.5Z M6.5 14Q8 15.5 9.5 14" stroke="#e8e8e8" stroke-width="1.2" fill="none"/></svg>
</div>

<div class="tx" style="left:667.43px;top:7.52px;font-size:13.5px;transform:scaleX(1.0654);transform-origin:0.57px 0;color:#cccccc;">ardugotchi</div>
<div class="tx" style="left:79.71px;top:43.12px;font-size:13.5px;transform:scaleX(1.0491);transform-origin:0.89px 0;color:#e2c08d;">main.cpp M</div>
<div class="tx" style="left:738.74px;top:43.12px;font-size:13.5px;transform:scaleX(1.0449);transform-origin:0.86px 0;color:#73c991;">pet.cpp U</div>
<div class="tx" style="left:63.94px;top:72.03px;font-size:13.2px;transform:scaleX(0.9884);transform-origin:0.36px 0;color:#a9a9a9;">src</div>
<div class="tx" style="left:118.83px;top:72.03px;font-size:13.2px;transform:scaleX(1.0721);transform-origin:0.87px 0;color:#a9a9a9;">main.cpp</div>
<div class="tx" style="left:210.92px;top:72.03px;font-size:13.2px;transform:scaleX(1.1011);transform-origin:0.88px 0;color:#a9a9a9;">loop</div>
<div class="tx" style="left:722.64px;top:72.03px;font-size:13.2px;transform:scaleX(1.0062);transform-origin:0.36px 0;color:#a9a9a9;">src</div>
<div class="tx" style="left:777.96px;top:72.03px;font-size:13.2px;transform:scaleX(1.0713);transform-origin:0.84px 0;color:#a9a9a9;">pet.cpp</div>
<div class="tx" style="left:857.92px;top:72.03px;font-size:13.2px;transform:scaleX(1.0508);transform-origin:1.08px 0;color:#a9a9a9;">Pet::feed</div>
<div class="tx" style="left:67.45px;top:541.38px;font-size:11.6px;transform:scaleX(0.8954);transform-origin:0.95px 0;color:#9d9d9d;">PROBLEMS</div>
<div class="tx" style="left:148.25px;top:541.38px;font-size:11.6px;transform:scaleX(0.9002);transform-origin:0.95px 0;color:#9d9d9d;">DEBUG CONSOLE</div>
<div class="tx" style="left:262.95px;top:541.38px;font-size:11.6px;transform:scaleX(0.8673);transform-origin:0.95px 0;color:#9d9d9d;">PORTS</div>
<div class="tx" style="left:321.62px;top:541.38px;font-size:11.6px;transform:scaleX(0.8963);transform-origin:0.58px 0;color:#9d9d9d;">GITLENS</div>
<div class="tx" style="left:389.85px;top:541.38px;font-size:11.6px;transform:scaleX(0.9195);transform-origin:0.55px 0;color:#9d9d9d;">OUTPUT</div>
<div class="tx" style="left:457.34px;top:541.38px;font-size:11.6px;transform:scaleX(0.9205);transform-origin:0.26px 0;color:#e7e7e7;">TERMINAL</div>
<div class="tx" style="left:1012.30px;top:541.20px;font-size:13px;transform:scaleX(0.9015);transform-origin:1.00px 0;color:#cccccc;">Upload and Monitor - Task</div>
<div class="tx" style="left:26.34px;top:747.20px;font-size:13px;transform:scaleX(1.0780);transform-origin:0.86px 0;color:#e6e9ef;">main*</div>
<div class="tx" style="left:155.89px;top:747.20px;font-size:13px;transform:scaleX(1.0000);transform-origin:0.51px 0;color:#e6e9ef;">0</div>
<div class="tx" style="left:185.29px;top:747.20px;font-size:13px;transform:scaleX(1.0000);transform-origin:0.51px 0;color:#e6e9ef;">0</div>
<div class="tx" style="left:227.51px;top:747.20px;font-size:13px;transform:scaleX(1.0000);transform-origin:0.99px 0;color:#e6e9ef;">1</div>
<div class="tx" style="left:492.63px;top:747.20px;font-size:13px;transform:scaleX(1.0018);transform-origin:1.07px 0;color:#e6e9ef;">Default (ardugotchi)</div>
<div class="tx" style="left:641.37px;top:747.20px;font-size:13px;transform:scaleX(1.0045);transform-origin:0.03px 0;color:#e6e9ef;">Auto</div>
<div class="tx" style="left:683.85px;top:747.20px;font-size:13px;transform:scaleX(0.9869);transform-origin:0.55px 0;color:#e6e9ef;">clangd: idle</div>
<div class="tx" style="left:783.61px;top:747.20px;font-size:13px;transform:scaleX(0.9850);transform-origin:0.99px 0;color:#e6e9ef;">1h 10m</div>
<div class="tx" style="left:870.53px;top:747.20px;font-size:13px;transform:scaleX(0.9256);transform-origin:1.07px 0;color:#e6e9ef;">Ln 9, Col 15</div>
<div class="tx" style="left:951.21px;top:747.20px;font-size:13px;transform:scaleX(0.9129);transform-origin:0.58px 0;color:#e6e9ef;">Spaces: 4</div>
<div class="tx" style="left:1019.40px;top:747.20px;font-size:13px;transform:scaleX(0.8960);transform-origin:1.00px 0;color:#e6e9ef;">UTF-8</div>
<div class="tx" style="left:1067.63px;top:747.20px;font-size:13px;transform:scaleX(0.8392);transform-origin:1.07px 0;color:#e6e9ef;">LF</div>
<div class="tx" style="left:1098.39px;top:747.20px;font-size:13px;transform:scaleX(1.0374);transform-origin:0.21px 0;color:#e6e9ef;">{ }</div>
<div class="tx" style="left:1118.15px;top:747.20px;font-size:13px;transform:scaleX(0.8891);transform-origin:0.65px 0;color:#e6e9ef;">C++</div>
<div class="tx" style="left:1207.05px;top:747.20px;font-size:13px;transform:scaleX(0.9248);transform-origin:0.65px 0;color:#e6e9ef;">Go Live</div>
<div class="tx" style="left:1283.13px;top:747.20px;font-size:13px;transform:scaleX(1.0215);transform-origin:1.07px 0;color:#e6e9ef;">Prettier</div>

</body></html>
